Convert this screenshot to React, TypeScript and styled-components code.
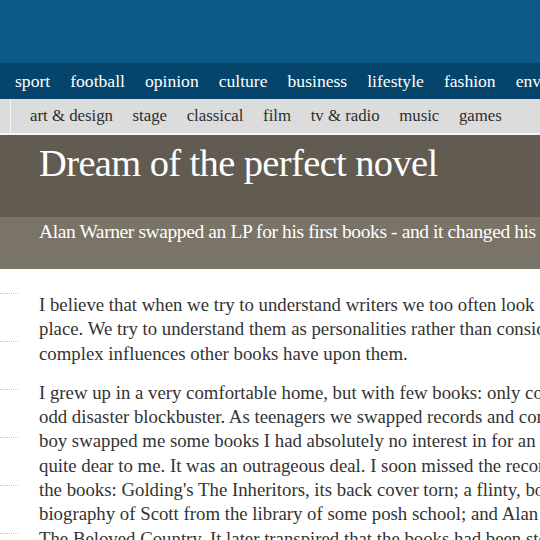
import styled, { createGlobalStyle } from 'styled-components'

const GlobalStyle = createGlobalStyle`
    html, body {
        margin: 0;
        padding: 0;
        background: #ffffff;
        overflow: hidden;
    }
    body {
        font-family: "Liberation Serif", serif;
    }
`

const Page = styled.div`
    width: 540px;
    height: 540px;
    overflow: hidden;
`

const Masthead = styled.div`
    height: 63px;
    background: #0a5987;
`

const NavBar = styled.nav`
    height: 36px;
    background: #05456c;
    display: flex;
    align-items: center;
    gap: 20px;
    padding-left: 15px;
    white-space: nowrap;
    overflow: hidden;
`

const NavLink = styled.span`
    color: #ffffff;
    font-size: 17.6px;
`

const SubNav = styled.nav`
    height: 34px;
    background: #dcdcdc;
    border-bottom: 2px solid #f4f4f4;
    display: flex;
    align-items: center;
    white-space: nowrap;
    overflow: hidden;
`

const SubNavEdge = styled.div`
    width: 10px;
    height: 100%;
    border-right: 1px solid #f4f4f4;
    flex-shrink: 0;
`

const SubNavList = styled.div`
    display: flex;
    gap: 19.6px;
    padding-left: 19px;
`

const SubNavLink = styled.span`
    color: #2e2e2e;
    font-size: 16.8px;
`

const Headline = styled.h1`
    margin: 0;
    height: 82px;
    box-sizing: border-box;
    padding: 6px 0 0 39px;
    background: #615b51;
    color: #ffffff;
    font-weight: normal;
    font-size: 38.5px;
    letter-spacing: -0.62px;
    white-space: nowrap;
`

const Standfirst = styled.div`
    height: 52px;
    box-sizing: border-box;
    padding: 4px 0 0 39px;
    background: #7a7368;
    color: #ffffff;
    font-size: 19.5px;
    letter-spacing: -0.4px;
    white-space: nowrap;
`

const Content = styled.div`
    display: flex;
    padding-top: 24px;
`

const SideColumn = styled.div`
    width: 18px;
    flex-shrink: 0;
    display: flex;
    flex-direction: column;
`

const SideRule = styled.div`
    height: 47px;
    border-top: 1px dotted #c8c8c8;
`

const Article = styled.div`
    padding-left: 21px;
    color: #333333;
    font-size: 18.8px;
    line-height: 24.3px;
    white-space: nowrap;
`

const Paragraph = styled.p`
    margin: 0 0 15px;
`

const navItems = ['sport', 'football', 'opinion', 'culture', 'business', 'lifestyle', 'fashion', 'environment']
const subItems = ['art & design', 'stage', 'classical', 'film', 'tv & radio', 'music', 'games']

const App = () => {
    return (
        <>
            <GlobalStyle />
            <Page>
                <Masthead />
                <NavBar>
                    {navItems.map((item) => (
                        <NavLink key={item}>{item}</NavLink>
                    ))}
                </NavBar>
                <SubNav>
                    <SubNavEdge />
                    <SubNavList>
                        {subItems.map((item) => (
                            <SubNavLink key={item}>{item}</SubNavLink>
                        ))}
                    </SubNavList>
                </SubNav>
                <Headline>Dream of the perfect novel</Headline>
                <Standfirst>Alan Warner swapped an LP for his first books - and it changed his life</Standfirst>
                <Content>
                    <SideColumn>
                        {[0, 1, 2, 3, 4, 5].map((i) => (
                            <SideRule key={i} />
                        ))}
                    </SideColumn>
                    <Article>
                        <Paragraph>
                            I believe that when we try to understand writers we too often look in the wrong
                            <br />
                            place. We try to understand them as personalities rather than considering the
                            <br />
                            complex influences other books have upon them.
                        </Paragraph>
                        <Paragraph>
                            I grew up in a very comfortable home, but with few books: only condensed novels, the
                            <br />
                            odd disaster blockbuster. As teenagers we swapped records and comics. One day a
                            <br />
                            boy swapped me some books I had absolutely no interest in for an LP which was
                            <br />
                            quite dear to me. It was an outrageous deal. I soon missed the record, but I read
                            <br />
                            the books: Golding's The Inheritors, its back cover torn; a flinty, bony
                            <br />
                            biography of Scott from the library of some posh school; and Alan Paton's Cry,
                            <br />
                            The Beloved Country. It later transpired that the books had been stolen.
                        </Paragraph>
                    </Article>
                </Content>
            </Page>
        </>
    )
}

export default App
